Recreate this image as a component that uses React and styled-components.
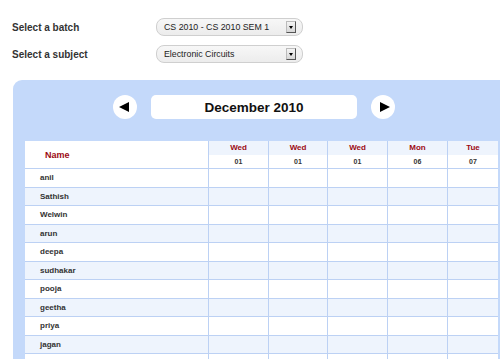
import React from "react";
import styled, { createGlobalStyle } from "styled-components";

const GlobalStyle = createGlobalStyle`
  body {
    margin: 0;
    background: #fff;
    font-family: "Liberation Sans", Arial, sans-serif;
    overflow: hidden;
  }
`;

const Page = styled.div`
  width: 500px;
  height: 359px;
  overflow: hidden;
  padding-top: 18px;
  box-sizing: border-box;
`;

const Form = styled.div`
  display: flex;
  flex-direction: column;
  gap: 9px;
  padding-left: 12px;
`;

const FormRow = styled.div`
  display: flex;
  align-items: center;
  height: 18px;
`;

const Label = styled.label`
  width: 144px;
  font-size: 10px;
  font-weight: bold;
  color: #333;
`;

const SelectBox = styled.div`
  width: 147px;
  height: 18px;
  box-sizing: border-box;
  border: 1px solid #cfcfcf;
  border-radius: 8px;
  background: linear-gradient(#f7f7f7, #ececec);
  display: flex;
  align-items: center;
  justify-content: space-between;
  padding: 0 6px 0 7px;
`;

const SelectText = styled.span`
  font-size: 8.8px;
  color: #222;
`;

const SelectArrow = styled.span`
  width: 10px;
  height: 12px;
  box-sizing: border-box;
  background: linear-gradient(#f4f4f4, #d6d6d6);
  border: 1px solid #bbb;
  border-right-color: #555;
  border-bottom-color: #555;
  display: flex;
  align-items: center;
  justify-content: center;
  &::after {
    content: "";
    border-left: 2.5px solid transparent;
    border-right: 2.5px solid transparent;
    border-top: 3px solid #000;
  }
`;

const Panel = styled.div`
  margin: 17px 0 0 13px;
  width: 520px;
  height: 300px;
  background: #c4d9fa;
  border-top-left-radius: 9px;
  padding: 15px 0 0 12px;
  box-sizing: border-box;
`;

const Nav = styled.div`
  display: flex;
  align-items: center;
  gap: 14px;
  padding-left: 88px;
  height: 24px;
`;

const NavButton = styled.button`
  width: 24px;
  height: 24px;
  border-radius: 50%;
  border: none;
  background: #fff;
  padding: 0;
  display: flex;
  align-items: center;
  justify-content: center;
  &::after {
    content: "";
    border-top: 5.5px solid transparent;
    border-bottom: 5.5px solid transparent;
    ${(p) =>
      p.$dir === "left"
        ? "border-right: 10px solid #000; margin-left: -2px;"
        : "border-left: 10px solid #000; margin-left: 3px;"}
  }
`;

const MonthBox = styled.div`
  width: 206px;
  height: 24px;
  background: #fff;
  border-radius: 5px;
  display: flex;
  align-items: center;
  justify-content: center;
  font-size: 13.5px;
  font-weight: bold;
  color: #111;
`;

const cols = "183px 60px 59px 60px 60px 51px";
const line = "#bcd1f4";

const Table = styled.div`
  margin-top: 22px;
  width: 473px;
  background: #fff;
`;

const HeaderRow = styled.div`
  display: grid;
  grid-template-columns: ${cols};
  height: 28px;
  border-bottom: 1px solid ${line};
  box-sizing: border-box;
`;

const NameHead = styled.div`
  display: flex;
  align-items: center;
  padding-left: 20px;
  font-size: 9px;
  font-weight: bold;
  color: #9c0a14;
`;

const DayHead = styled.div`
  border-left: 1px solid ${line};
  display: grid;
  grid-template-rows: 14px 13px;
  text-align: center;
  font-weight: bold;
`;

const DayName = styled.div`
  background: #eef4fd;
  font-size: 8px;
  color: #9c0a14;
  line-height: 14px;
`;

const DayDate = styled.div`
  font-size: 7px;
  color: #333;
  line-height: 13px;
`;

const Row = styled.div`
  display: grid;
  grid-template-columns: ${cols};
  height: 18.5px;
  box-sizing: border-box;
  border-bottom: 1px solid ${line};
  background: ${(p) => (p.$alt ? "#eef4fd" : "#fff")};
`;

const NameCell = styled.div`
  padding-left: 15px;
  font-size: 8px;
  font-weight: bold;
  color: #333;
  display: flex;
  align-items: center;
`;

const Cell = styled.div`
  border-left: 1px solid ${line};
`;

const days = [
  ["Wed", "01"],
  ["Wed", "01"],
  ["Wed", "01"],
  ["Mon", "06"],
  ["Tue", "07"],
];

const students = [
  "anil",
  "Sathish",
  "Welwin",
  "arun",
  "deepa",
  "sudhakar",
  "pooja",
  "geetha",
  "priya",
  "jagan",
  "",
];

export default function App() {
  return (
    <Page>
      <GlobalStyle />
      <Form>
        <FormRow>
          <Label>Select a batch</Label>
          <SelectBox>
            <SelectText>CS 2010 - CS 2010 SEM 1</SelectText>
            <SelectArrow />
          </SelectBox>
        </FormRow>
        <FormRow>
          <Label>Select a subject</Label>
          <SelectBox>
            <SelectText>Electronic Circuits</SelectText>
            <SelectArrow />
          </SelectBox>
        </FormRow>
      </Form>
      <Panel>
        <Nav>
          <NavButton $dir="left" aria-label="Previous month" />
          <MonthBox>December 2010</MonthBox>
          <NavButton $dir="right" aria-label="Next month" />
        </Nav>
        <Table>
          <HeaderRow>
            <NameHead>Name</NameHead>
            {days.map(([d, n], i) => (
              <DayHead key={i}>
                <DayName>{d}</DayName>
                <DayDate>{n}</DayDate>
              </DayHead>
            ))}
          </HeaderRow>
          {students.map((s, i) => (
            <Row key={i} $alt={i % 2 === 1}>
              <NameCell>{s}</NameCell>
              {days.map((_, j) => (
                <Cell key={j} />
              ))}
            </Row>
          ))}
        </Table>
      </Panel>
    </Page>
  );
}
